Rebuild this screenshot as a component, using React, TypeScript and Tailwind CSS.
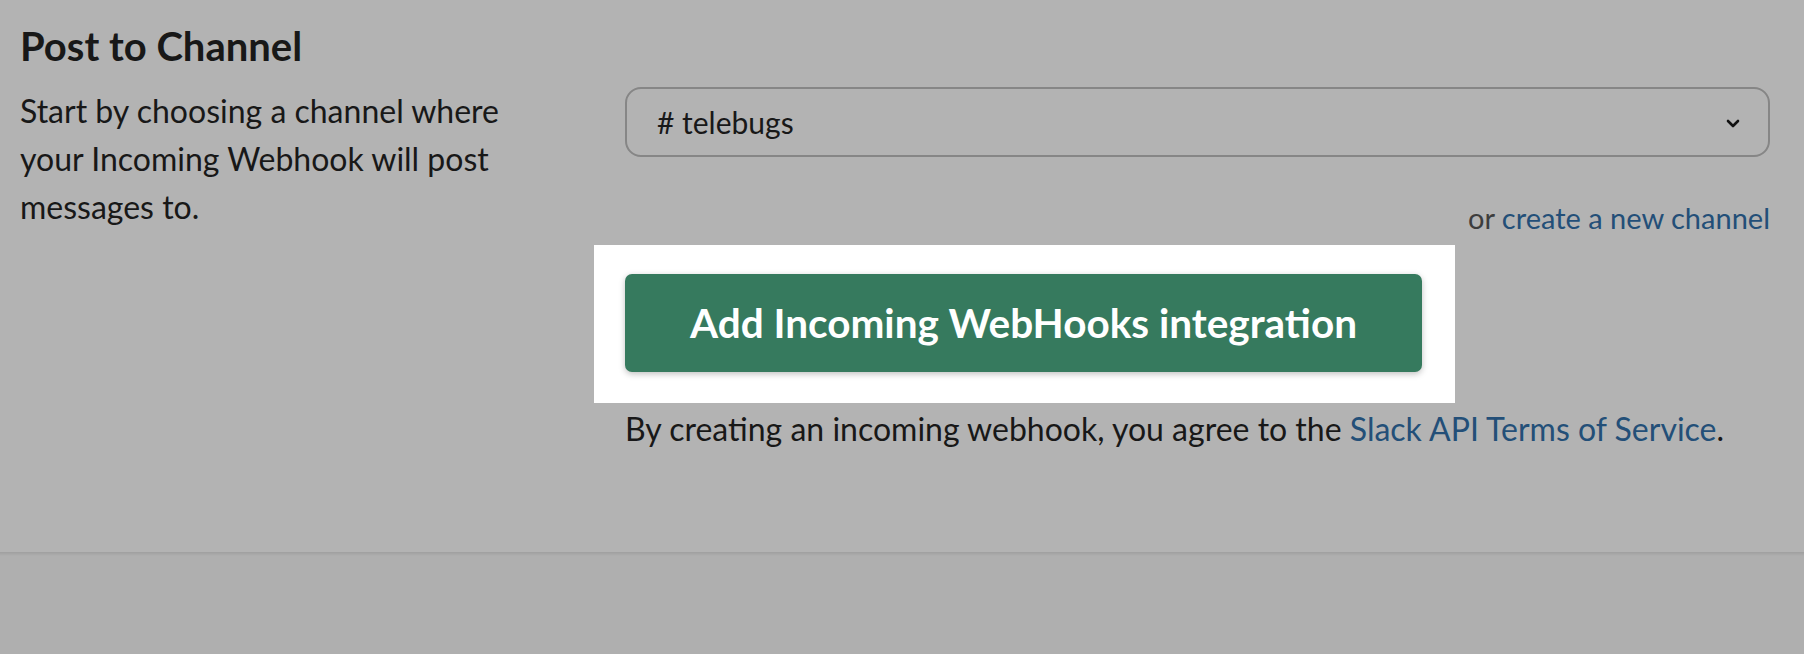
export default function App() {
  return (
    <div className="min-h-screen bg-[#b3b3b3] font-['Lato','Noto_Sans',sans-serif] text-[#181818]">
      {/* Section */}
      <div className="h-[552px] pl-[20px] pr-[34px] pt-[22px]">
        <h2 className="text-[40px] font-bold leading-[48px]">Post to Channel</h2>

        <div className="mt-[17px] flex">
          {/* Description */}
          <div className="w-[500px] shrink-0">
            <p className="text-[32px] leading-[48px]">
              Start by choosing a channel where your Incoming Webhook will post messages to.
            </p>
          </div>

          {/* Controls */}
          <div className="ml-[105px] flex-1">
            <div className="flex h-[70px] items-center justify-between rounded-[16px] border-2 border-[#868686] pl-[30px] pr-[28px]">
              <span className="text-[30px] leading-[36px]"># telebugs</span>
              <svg width="14" height="9" viewBox="0 0 14 9" fill="none" className="mt-[2px]">
                <path d="M2 2l5 5 5-5" stroke="#111" strokeWidth="2.6" strokeLinecap="round" strokeLinejoin="round" />
              </svg>
            </div>

            <p className="mt-[41px] text-right text-[29px] leading-[40px] text-[#3d3d3d]">
              or <a className="text-[#234f78]">create a new channel</a>
            </p>

            <div className="-ml-[31px] mt-[7px] inline-block bg-white pb-[31px] pl-[31px] pr-[33px] pt-[29px]">
              <button className="flex h-[98px] w-[797px] items-center justify-center rounded-[7px] bg-[#367a5e] text-[40.5px] font-bold text-white shadow-[0_2px_6px_rgba(0,0,0,0.25)]">
                Add Incoming WebHooks integration
              </button>
            </div>

            <p className="mt-[2px] text-[32px] leading-[48px]">
              By creating an incoming webhook, you agree to the{' '}
              <a className="text-[#234f78]">Slack API Terms of Service</a>.
            </p>
          </div>
        </div>
      </div>

      {/* Footer area */}
      <div className="h-[4px] bg-gradient-to-b from-[#9f9f9f] to-[#afafaf]" />
      <div className="h-[98px] bg-[#afafaf]" />
    </div>
  )
}
